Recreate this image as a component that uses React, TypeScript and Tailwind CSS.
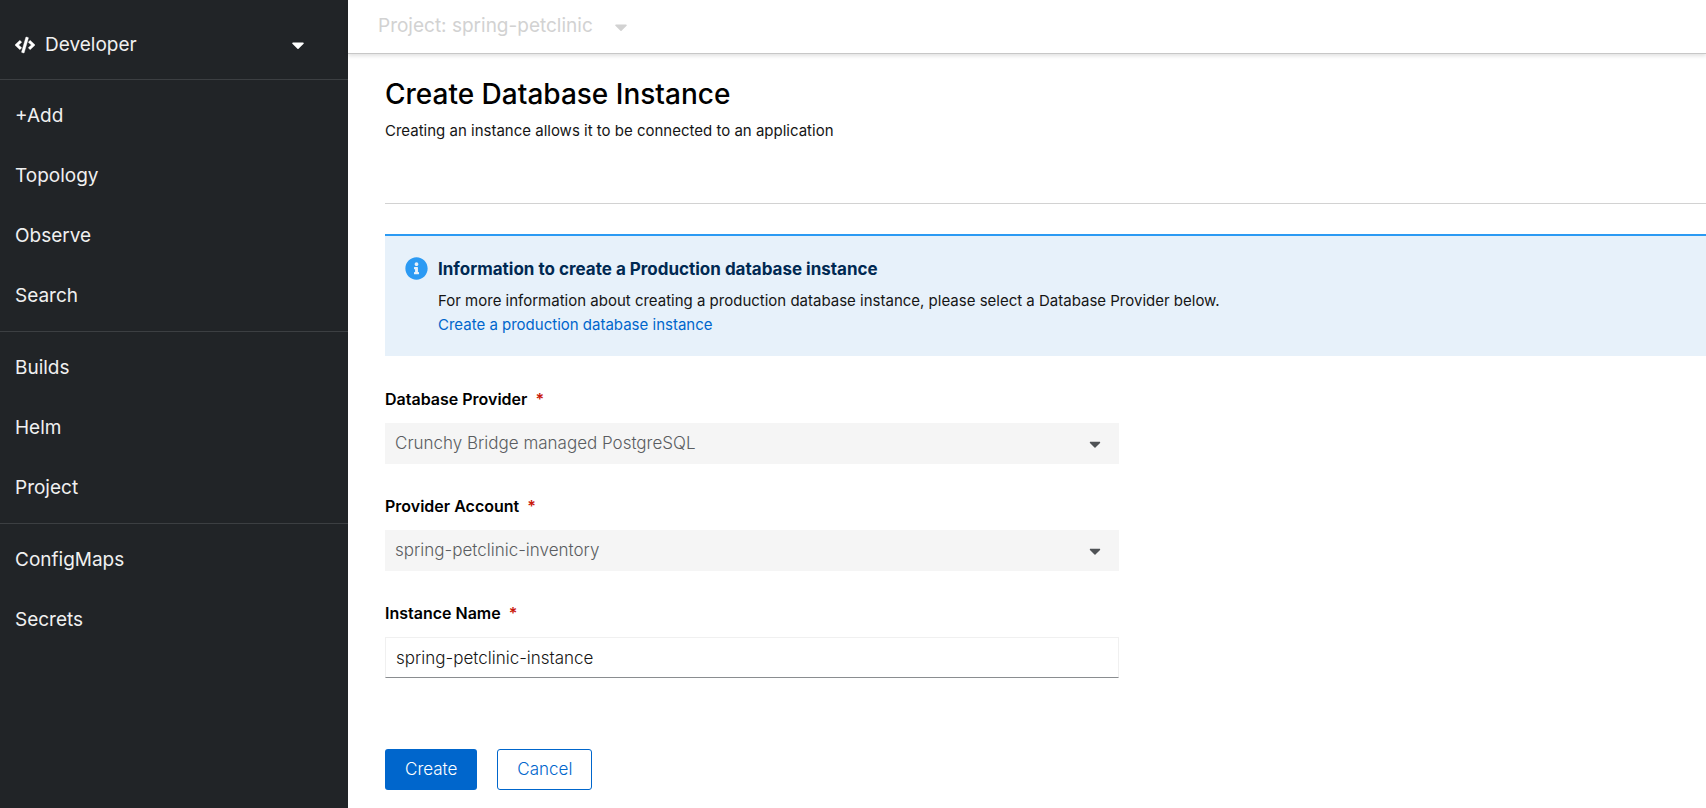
import { useState } from "react";
import type { ReactNode } from "react";
import { FaCaretDown, FaCode, FaInfoCircle } from "react-icons/fa";

const navSections = [
  ["+Add", "Topology", "Observe", "Search"],
  ["Builds", "Helm", "Project"],
  ["ConfigMaps", "Secrets"],
];

function Sidebar() {
  return (
    <aside className="w-[348px] shrink-0 bg-[#212427] text-[19px] text-[#f0f0f0]">
      <button
        type="button"
        className="flex h-20 w-full items-center border-b border-[#3c3f42] pr-10 pl-[15px] pt-[11px] text-left"
      >
        <FaCode className="size-5 text-white" stroke="currentColor" strokeWidth="12" />
        <span className="ml-2.5 flex-1">Developer</span>
        <FaCaretDown className="size-5 text-white" />
      </button>
      <nav aria-label="Main">
        {navSections.map((items) => (
          <ul key={items[0]} className="border-b border-[#3c3f42] pt-1.5 pb-[5px] last:border-b-0">
            {items.map((item) => (
              <li key={item}>
                <a href="#" className="flex h-[60px] items-center px-[15px]">
                  {item}
                </a>
              </li>
            ))}
          </ul>
        ))}
      </nav>
    </aside>
  );
}

function Field({ id, label, children }: { id: string; label: string; children: ReactNode }) {
  return (
    <div className="flex flex-col gap-3">
      <label htmlFor={id} className="text-base leading-6 font-semibold text-black">
        {label}
        <span className="ml-2 text-[#c9190b]">*</span>
      </label>
      {children}
    </div>
  );
}

function DisabledSelect({ id, value }: { id: string; value: string }) {
  return (
    <div className="relative">
      <select
        id={id}
        disabled
        className="h-[41px] w-full appearance-none bg-[#f5f5f5] px-2.5 text-[17px] font-light text-[#5a5d61] opacity-100"
      >
        <option>{value}</option>
      </select>
      <FaCaretDown className="pointer-events-none absolute top-3 right-[15px] size-[18px] text-[#4f5255]" />
    </div>
  );
}

export default function App() {
  const [name, setName] = useState("spring-petclinic-instance");

  return (
    <div className="flex min-h-screen bg-white font-['Inter',sans-serif] text-[#151515]">
      <Sidebar />
      <main className="min-w-0 flex-1">
        <div className="flex h-[54px] items-center border-b border-[#c7c7c7] pl-[30px] shadow-[0_2px_4px_rgba(0,0,0,0.12)]">
          <button type="button" disabled className="flex items-center gap-[18px] text-[19px] text-[#d2d2d2]">
            Project: spring-petclinic
            <FaCaretDown className="size-5" />
          </button>
        </div>
        <div className="pl-[37px]">
          <header className="border-b border-[#d2d2d2] pt-5 pb-[60px]">
            <h1 className="text-[28px] leading-10 font-medium text-black">Create Database Instance</h1>
            <p className="mt-[5px] text-[15px] leading-6">
              Creating an instance allows it to be connected to an application
            </p>
          </header>
          <section className="mt-[30px] flex gap-2.5 border-t-2 border-[#2b9af3] bg-[#e7f1fa] px-5 pt-[21px] pb-[19px]">
            <FaInfoCircle className="size-[23px] shrink-0 text-[#2b9af3]" />
            <div className="text-[15px] leading-6">
              <h2 className="mb-2 text-[17px] leading-6 font-bold text-[#002952]">
                Information to create a Production database instance
              </h2>
              <p>
                For more information about creating a production database instance, please select a Database
                Provider below.
              </p>
              <a href="#" className="text-[#0066cc]">
                Create a production database instance
              </a>
            </div>
          </section>
          <form className="mt-[31px] max-w-[734px]" onSubmit={(event) => event.preventDefault()}>
            <div className="flex flex-col gap-[30px]">
              <Field id="provider" label="Database Provider">
                <DisabledSelect id="provider" value="Crunchy Bridge managed PostgreSQL" />
              </Field>
              <Field id="account" label="Provider Account">
                <DisabledSelect id="account" value="spring-petclinic-inventory" />
              </Field>
              <Field id="name" label="Instance Name">
                <input
                  id="name"
                  type="text"
                  required
                  value={name}
                  onChange={(event) => setName(event.target.value)}
                  className="h-[41px] w-full border border-[#f0f0f0] border-b-[#8a8d90] px-2.5 text-[17px] font-light outline-none"
                />
              </Field>
            </div>
            <div className="mt-[71px] flex gap-5 text-[17px] font-light">
              <button type="submit" className="h-[41px] rounded-[3px] bg-[#0066cc] px-5 text-white">
                Create
              </button>
              <button type="button" className="h-[41px] rounded-[3px] border border-[#0066cc] px-[19px] text-[#0066cc]">
                Cancel
              </button>
            </div>
          </form>
        </div>
      </main>
    </div>
  );
}
